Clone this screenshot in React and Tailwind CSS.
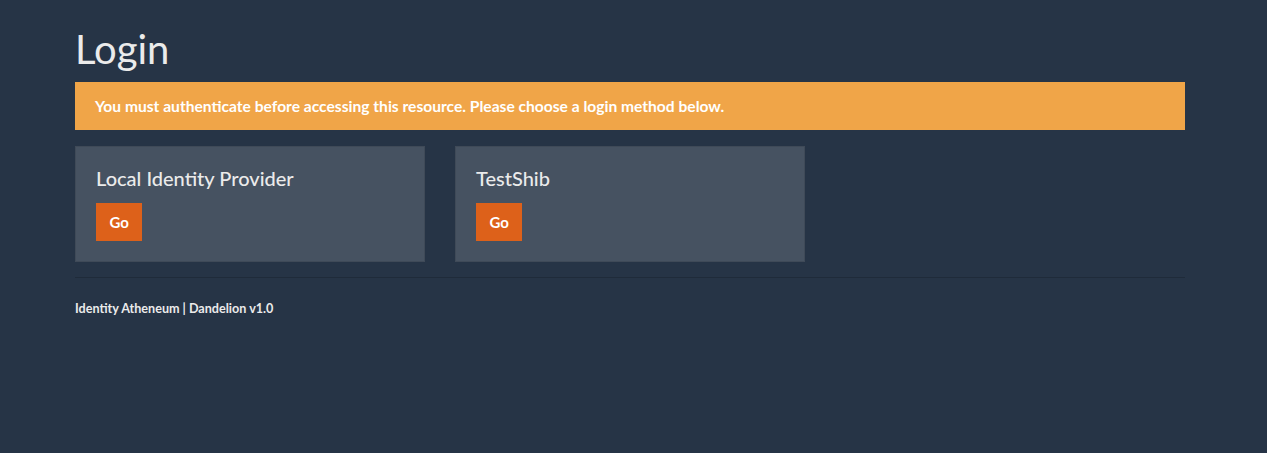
import React from "react";

const providers = [
  { id: "local", name: "Local Identity Provider" },
  { id: "testshib", name: "TestShib" },
];

const ProviderCard = ({ name }) => {
  return (
    <div className="bg-[#465261] border border-[#3f4a58] p-[20px] pt-[20px]">
      <h3 className="text-[20px] leading-[23px] text-[#ebebeb] font-medium">
        {name}
      </h3>
      <button
        type="button"
        className="mt-[13px] h-[38px] px-[13.5px] bg-[#dd611a] hover:bg-[#c4581a] text-white text-[15px] font-bold"
      >
        Go
      </button>
    </div>
  );
};

const App = () => {
  return (
    <div
      className="min-h-screen bg-[#263446] text-[#ebebeb]"
      style={{ fontFamily: "Lato, 'Noto Sans', sans-serif" }}
    >
      <div className="w-[1110px] ml-[75px] pt-[28px]">
        <h1 className="text-[40px] leading-[43px] font-normal text-[#ebebeb]">
          Login
        </h1>
        <div className="mt-[11px] bg-[#f0a548] text-white text-[15.6px] font-bold leading-[18px] px-[20px] py-[15px]">
          You must authenticate before accessing this resource. Please choose a
          login method below.
        </div>
        <div className="mt-[16px] grid grid-cols-3 gap-[30px]">
          {providers.map((provider) => (
            <ProviderCard key={provider.id} name={provider.name} />
          ))}
        </div>
        <hr className="mt-[15px] border-0 border-t border-[#1f2b3a]" />
        <p className="mt-[22px] text-[12.6px] leading-[17px] font-bold text-[#ebebeb]">
          Identity Atheneum | Dandelion v1.0
        </p>
      </div>
    </div>
  );
};

export default App;
